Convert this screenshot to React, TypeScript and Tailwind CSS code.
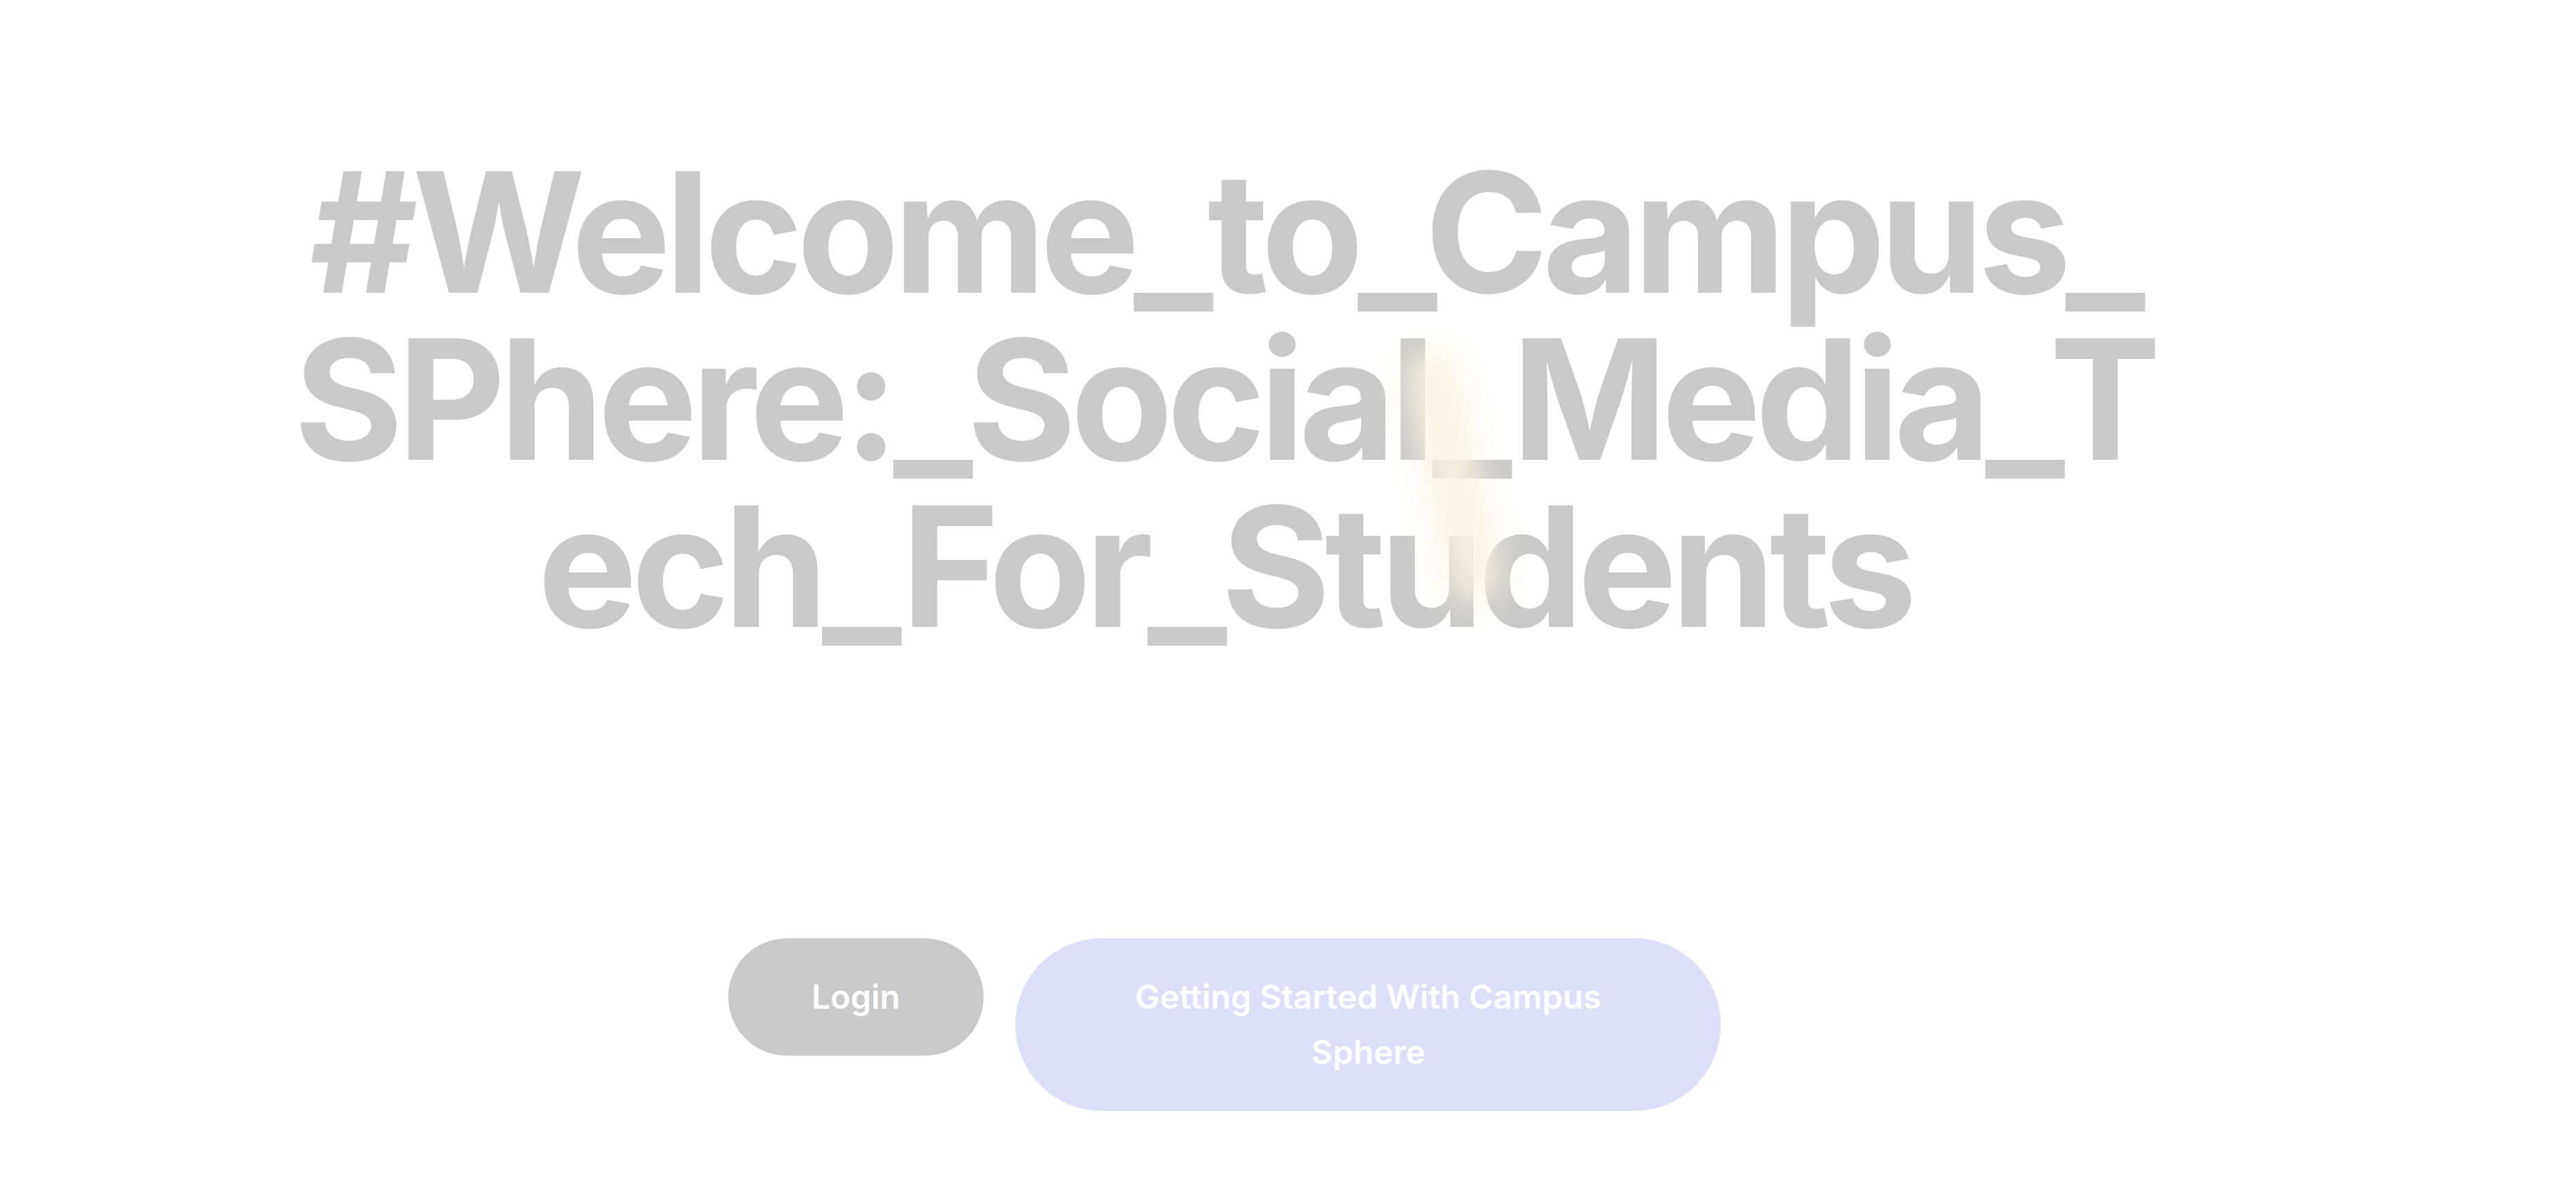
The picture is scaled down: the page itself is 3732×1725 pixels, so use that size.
export default function App() {
  return (
    <div className="relative min-h-screen w-full bg-white font-['Inter',sans-serif]">
      <div className="flex flex-col items-center pr-[184px] pt-[215px]">
        {/* Title */}
        <h1 className="w-[2740px] break-all text-center text-[242px] font-bold leading-none tracking-[-0.035em] text-[#c9c9c9]">
          #Welcome_to_Campus_SPhere:_Social_Media_Tech_For_Students
        </h1>

        {/* Actions */}
        <div className="mt-[418px] flex items-start gap-[46px]">
          <button className="rounded-full bg-[#c9c9c9] px-[121px] py-[45px] text-[48px] font-semibold leading-[80px] text-white">
            Login
          </button>
          <button className="w-[1022px] rounded-full bg-[#dddef9] px-[123px] py-[45px] text-center text-[48px] font-semibold leading-[80px] text-white">
            Getting Started With Campus Sphere
          </button>
        </div>
      </div>

      {/* soft glow streak over the title */}
      <div className="pointer-events-none absolute left-[2070px] top-[505px] h-[370px] w-[70px] -rotate-[12deg] rounded-full bg-[#f8f2df] blur-[24px]" />
    </div>
  );
}
